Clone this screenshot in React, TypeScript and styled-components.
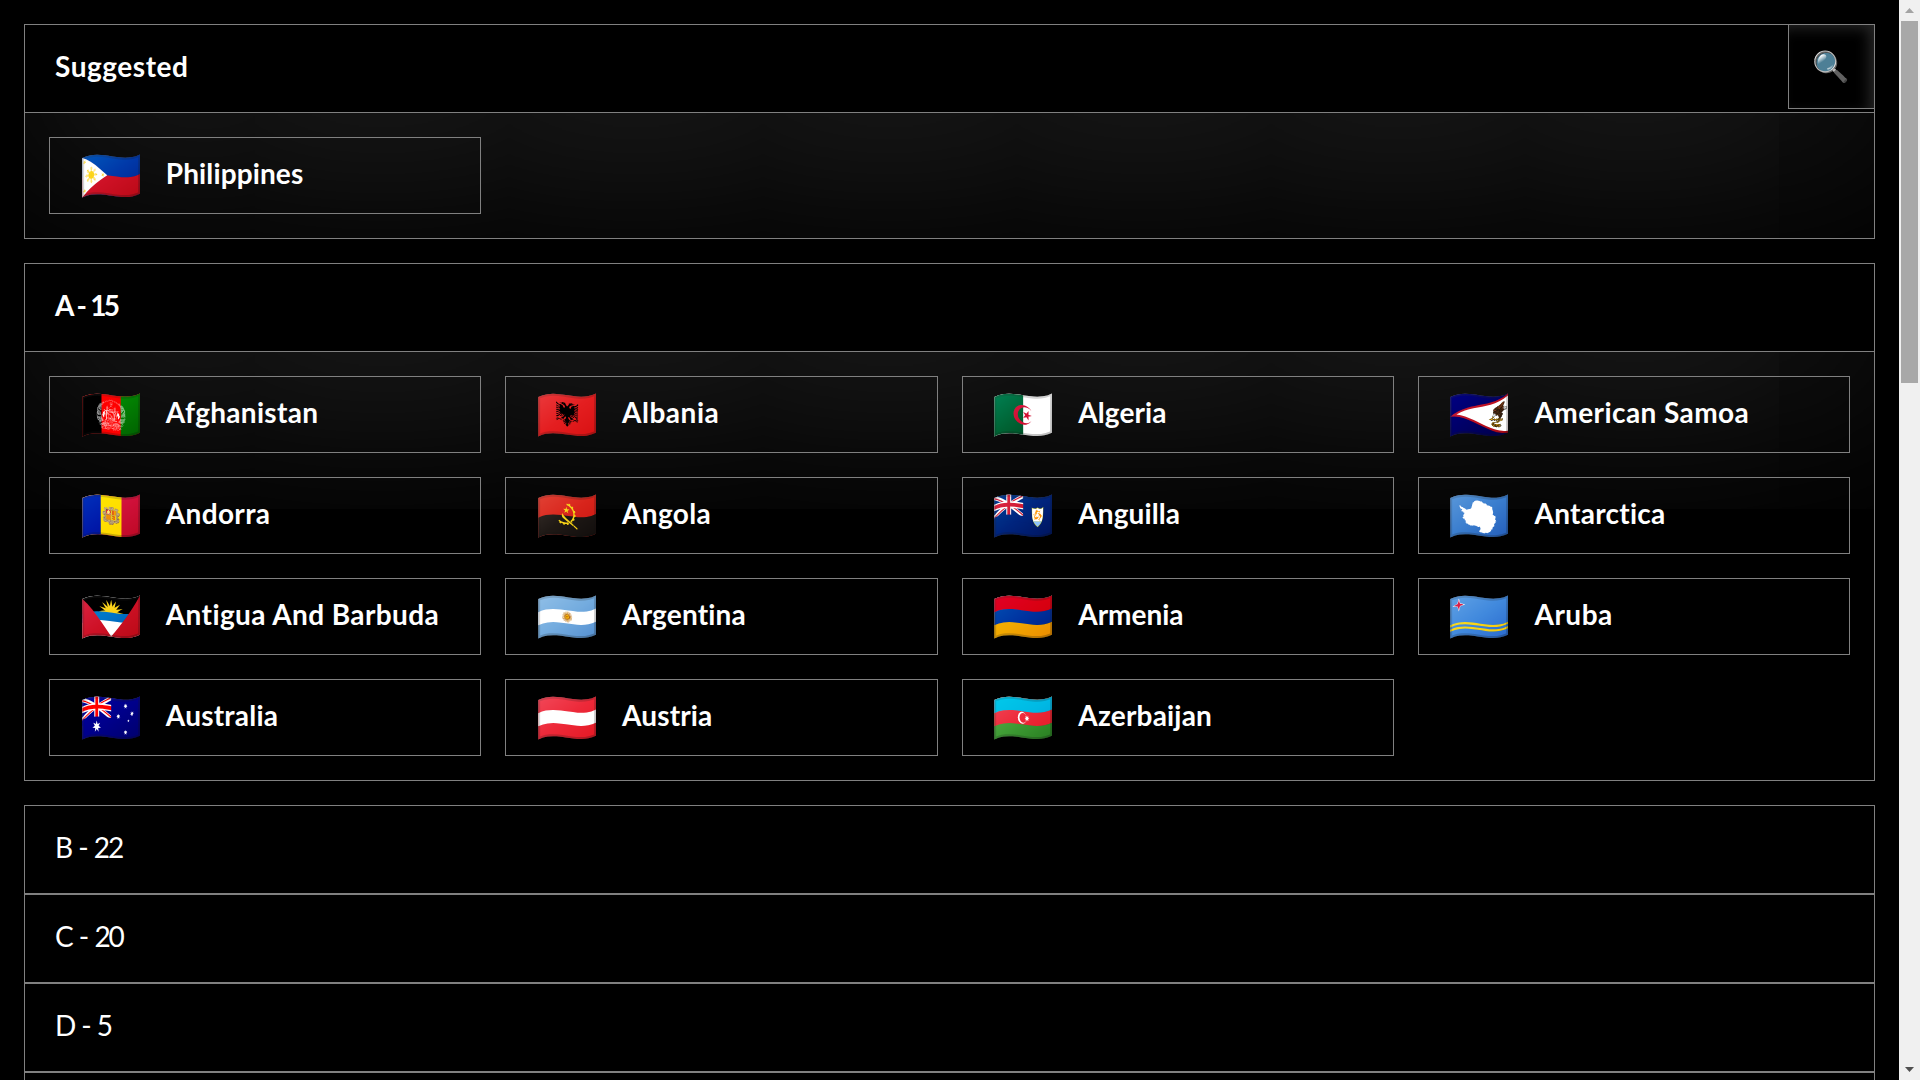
import React from 'react';
import styled, { createGlobalStyle } from 'styled-components';

const LINE = '#808080';

const GlobalStyle = createGlobalStyle`
  *, *::before, *::after { box-sizing: border-box; }
  body {
    margin: 0;
    overflow: hidden;
    background: #000;
    color: #fff;
    font-family: Lato, "Open Sans", sans-serif;
    font-size: 28px;
    line-height: 34px;
  }
`;

const Page = styled.div`
  display: flex;
  height: 1080px;
  overflow: hidden;
`;

const Main = styled.main`
  flex: 1;
  display: flex;
  flex-direction: column;
  gap: 24px;
  padding: 24px;
`;

const Section = styled.section`
  flex: none;
  border: 1px solid ${LINE};
  overflow: hidden;
`;

const Collapsed = styled.div`
  flex: none;
  display: flex;
  flex-direction: column;
`;

const Header = styled.header<{ $open?: boolean }>`
  display: flex;
  align-items: center;
  justify-content: space-between;
  height: 87px;
  padding-left: 30px;
  background: #000;
  font-weight: ${(p) => (p.$open ? 700 : 400)};
  box-shadow: ${(p) => (p.$open ? '0 0 240px rgba(255, 255, 255, 0.29)' : 'none')};
`;

const Title = styled.span<{ $spacing: number; $gap?: number }>`
  padding-bottom: 5px;
  letter-spacing: ${(p) => p.$spacing}px;
  word-spacing: ${(p) => p.$gap ?? 0}px;
  white-space: nowrap;
`;

const SearchButton = styled.button`
  align-self: flex-start;
  width: 86px;
  height: 84px;
  padding: 0 1px 0 0;
  border: 0 solid ${LINE};
  border-width: 0 0 1px 1px;
  background: #000;
  box-shadow: inset -7px 5px 14px -2px #262626;
  font-family: "Noto Color Emoji", sans-serif;
  font-size: 30px;
`;

const Body = styled.div`
  display: grid;
  grid-template-columns: repeat(4, 1fr);
  gap: 24px;
  padding: 24px;
  border-top: 1px solid ${LINE};
`;

const Tile = styled.div`
  display: flex;
  align-items: center;
  gap: 24px;
  height: 77px;
  padding-left: 29.6px;
  border: 1px solid ${LINE};
`;

const Flag = styled.span`
  width: 62.2px;
  padding-bottom: 2px;
  font-size: 50px;
  line-height: 57px;
  white-space: nowrap;
`;

const Name = styled.span<{ $spacing: number }>`
  padding-bottom: 5px;
  font-weight: 700;
  letter-spacing: ${(p) => p.$spacing}px;
  white-space: nowrap;
`;

const Scrollbar = styled.aside`
  flex: none;
  display: flex;
  flex-direction: column;
  align-items: center;
  width: 21px;
  background: #f0f0f0;
`;

const Arrow = styled.div<{ $down?: boolean }>`
  display: flex;
  align-items: center;
  justify-content: center;
  width: 21px;
  height: 21px;
  margin-top: ${(p) => (p.$down ? 'auto' : '0')};
  color: ${(p) => (p.$down ? '#505050' : '#a3a3a3')};
  transform: ${(p) => (p.$down ? 'scaleY(-1)' : 'none')};
`;

const Thumb = styled.div`
  width: 17px;
  height: 362px;
  background: #a8a8a8;
`;

type Country = { flag: string; name: string; spacing: number };

const suggested: Country[] = [{ flag: '🇵🇭', name: 'Philippines', spacing: 0.12 }];

const countries: Country[] = [
  { flag: '🇦🇫', name: 'Afghanistan', spacing: 0.3 },
  { flag: '🇦🇱', name: 'Albania', spacing: 0.52 },
  { flag: '🇩🇿', name: 'Algeria', spacing: 0.1 },
  { flag: '🇦🇸', name: 'American Samoa', spacing: 0.42 },
  { flag: '🇦🇩', name: 'Andorra', spacing: 0.35 },
  { flag: '🇦🇴', name: 'Angola', spacing: 0.34 },
  { flag: '🇦🇮', name: 'Anguilla', spacing: 0.1 },
  { flag: '🇦🇶', name: 'Antarctica', spacing: 0.26 },
  { flag: '🇦🇬', name: 'Antigua And Barbuda', spacing: 0.4 },
  { flag: '🇦🇷', name: 'Argentina', spacing: 0.18 },
  { flag: '🇦🇲', name: 'Armenia', spacing: -0.03 },
  { flag: '🇦🇼', name: 'Aruba', spacing: 0.49 },
  { flag: '🇦🇺', name: 'Australia', spacing: 0.23 },
  { flag: '🇦🇹', name: 'Austria', spacing: 0.13 },
  { flag: '🇦🇿', name: 'Azerbaijan', spacing: 0.2 },
];

const collapsed = [
  { title: 'B - 22', spacing: -2.2, gap: 2.4 },
  { title: 'C - 20', spacing: -2.2, gap: 2.4 },
  { title: 'D - 5', spacing: -2, gap: 1.9 },
  { title: '', spacing: 0, gap: 0 },
];

const Countries = ({ items }: { items: Country[] }) => (
  <Body>
    {items.map((c) => (
      <Tile key={c.name}>
        <Flag>{c.flag}</Flag>
        <Name $spacing={c.spacing}>{c.name}</Name>
      </Tile>
    ))}
  </Body>
);

const Triangle = () => (
  <svg width="9" height="5" viewBox="0 0 9 5" fill="currentColor">
    <path d="M4.5 0L9 5H0z" />
  </svg>
);

export default function App() {
  return (
    <>
      <GlobalStyle />
      <Page>
        <Main>
          <Section>
            <Header $open>
              <Title $spacing={0.54}>Suggested</Title>
              <SearchButton>🔍</SearchButton>
            </Header>
            <Countries items={suggested} />
          </Section>
          <Section>
            <Header $open>
              <Title $spacing={-2.6} $gap={1.5}>A - 15</Title>
            </Header>
            <Countries items={countries} />
          </Section>
          <Collapsed>
            {collapsed.map((s) => (
              <Section key={s.title}>
                <Header>
                  <Title $spacing={s.spacing} $gap={s.gap}>{s.title}</Title>
                </Header>
              </Section>
            ))}
          </Collapsed>
        </Main>
        <Scrollbar>
          <Arrow><Triangle /></Arrow>
          <Thumb />
          <Arrow $down><Triangle /></Arrow>
        </Scrollbar>
      </Page>
    </>
  );
}
